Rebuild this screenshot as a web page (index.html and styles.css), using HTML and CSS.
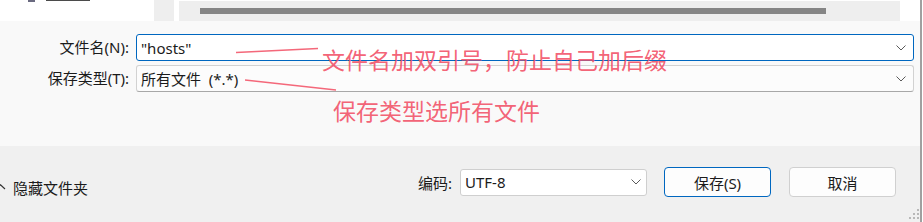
FILE: index.html
```html
<!DOCTYPE html>
<html>
<head>
  <meta charset="UTF-8">
  <title>另存为</title>
  <link rel="stylesheet" href="styles.css">
</head>

<body>
  <div class="page">
    <!-- file list area, cut off at top -->
    <div class="browse">
      <div class="nav"><span class="nav-ico"></span><span class="nav-txt"></span></div>
      <div class="nav-track"></div>
      <div class="list">
        <div class="hscroll"></div>
      </div>
      <div class="list-end"></div>
    </div>

    <div class="form">
      <label class="lbl">文件名(N):</label>
      <div class="field field-active">
        <span>"hosts"</span>
        <svg class="chev" width="10" height="6" viewBox="0 0 10 6"><path d="M0.5 0.5 L5 5 L9.5 0.5" fill="none" stroke="#5a5a5a" stroke-width="1"/></svg>
      </div>
      <label class="lbl">保存类型(T):</label>
      <div class="field">
        <span>所有文件&nbsp;&nbsp;(*.*)</span>
        <svg class="chev" width="10" height="6" viewBox="0 0 10 6"><path d="M0.5 0.5 L5 5 L9.5 0.5" fill="none" stroke="#5a5a5a" stroke-width="1"/></svg>
      </div>
    </div>

    <div class="footer">
      <div class="hide-folders">
        <svg class="up" width="6" height="6" viewBox="0 0 6 6"><path d="M-4 5 L0.5 0.8 L5 5" fill="none" stroke="#333" stroke-width="1.2"/></svg>
        <span>隐藏文件夹</span>
      </div>
      <span class="enc-lbl">编码:</span>
      <div class="select">
        <span>UTF-8</span>
        <svg class="chev" width="10" height="6" viewBox="0 0 10 6"><path d="M0.5 0.5 L5 5 L9.5 0.5" fill="none" stroke="#5a5a5a" stroke-width="1"/></svg>
      </div>
      <button class="btn btn-default">保存(S)</button>
      <button class="btn">取消</button>
      <svg class="grip" width="14" height="14" viewBox="0 0 14 14">
        <rect x="11" y="2" width="2" height="2"/>
        <rect x="7" y="6" width="2" height="2"/><rect x="11" y="6" width="2" height="2"/>
        <rect x="3" y="10" width="2" height="2"/><rect x="7" y="10" width="2" height="2"/><rect x="11" y="10" width="2" height="2"/>
      </svg>
    </div>

    <!-- red notes drawn over the dialog -->
    <svg class="marks" width="923" height="222">
      <path d="M236 52.5 L318 48.5" stroke="#f4687a" stroke-width="1.4" fill="none"/>
      <path d="M245 80 L336 90" stroke="#f4687a" stroke-width="1.4" fill="none"/>
    </svg>
    <span class="note note-1">文件名加双引号，防止自己加后缀</span>
    <span class="note note-2">保存类型选所有文件</span>
  </div>
</body>
</html>
```

FILE: styles.css
```css
/* dialog bottom part */
body {
  margin: 0;
  background: #fff;
  font-family: "Noto Sans", "Noto Sans CJK SC", sans-serif;
  font-size: 14px;
  color: #1b1b1b;
}
.page {
  position: relative;
  width: 920px;
  height: 222px;
  border-right: 2px solid #a0a0a0;
  overflow: hidden;
}

/* top strip */
.browse { display: flex; height: 21px; background: #fff; }
.nav { width: 154px; position: relative; }
.nav-ico { position: absolute; left: 28px; top: 0; width: 7px; height: 2px; background: #6a6a80; }
.nav-txt { position: absolute; left: 46px; top: 0; width: 44px; height: 1px; background: #4b4b4b; }
.nav-track { width: 20px; background: #eeeeee; }
.list {
  width: 721px;
  margin-left: 5px;
  margin-top: 1px;
  background: #eeeeee;
}
.hscroll {
  width: 626px;
  height: 6px;
  margin: 7px 0 0 21px;
  background: #858585;
}
.list-end { flex: 1; }

/* name / type rows */
.form {
  height: 112px;
  padding-top: 13px;
  background: #f9f9f9;
  display: grid;
  grid-template-columns: 129px 778px;
  grid-auto-rows: 27px;
  column-gap: 7px;
  row-gap: 4px;
  align-content: start;
}
.lbl {
  text-align: right;
  line-height: 27px;
  font-size: 15px;
}
.field {
  display: flex;
  align-items: center;
  justify-content: space-between;
  padding: 0 7px 0 4px;
  background: #fcfcfc;
  border: 1px solid #d2d2d2;
  border-bottom-color: #a8a8a8;
  border-radius: 3px;
  font-size: 15px;
}
.field-active { background: #fff; border-color: #0067c0; }

/* bottom bar */
.footer {
  position: relative;
  height: 76px;
  background: #f0f0f0;
  display: flex;
  align-items: center;
  padding-bottom: 4px;
  box-sizing: border-box;
}
.hide-folders {
  width: 418px;
  display: flex;
  align-items: center;
  gap: 7px;
  margin-top: 10px;
  font-size: 15px;
}
.enc-lbl { width: 42px; font-size: 15px; }
.select {
  width: 187px;
  height: 27px;
  box-sizing: border-box;
  display: flex;
  align-items: center;
  justify-content: space-between;
  padding: 0 5px 0 4px;
  background: #fff;
  border: 1px solid #cfcfcf;
  border-radius: 3px;
  font-size: 15px;
}
.btn {
  width: 107px;
  height: 30px;
  margin-left: 17px;
  background: #fdfdfd;
  border: 1px solid #d0d0d0;
  border-radius: 4px;
  font-family: inherit;
  font-size: 15px;
  color: #1b1b1b;
}
.btn + .btn { margin-left: 18px; }
.btn-default { border-color: #0067c0; }
.grip { position: absolute; right: 0; bottom: 1px; fill: #b8b8b8; }

/* annotations */
.marks { position: absolute; left: 0; top: 0; pointer-events: none; }
.note {
  position: absolute;
  font-family: "Noto Sans CJK SC", sans-serif;
  font-size: 23px;
  line-height: 23px;
  color: rgba(242, 80, 102, 0.9);
  white-space: nowrap;
}
.note-1 { left: 322px; top: 48px; }
.note-2 { left: 333px; top: 99px; }
```
